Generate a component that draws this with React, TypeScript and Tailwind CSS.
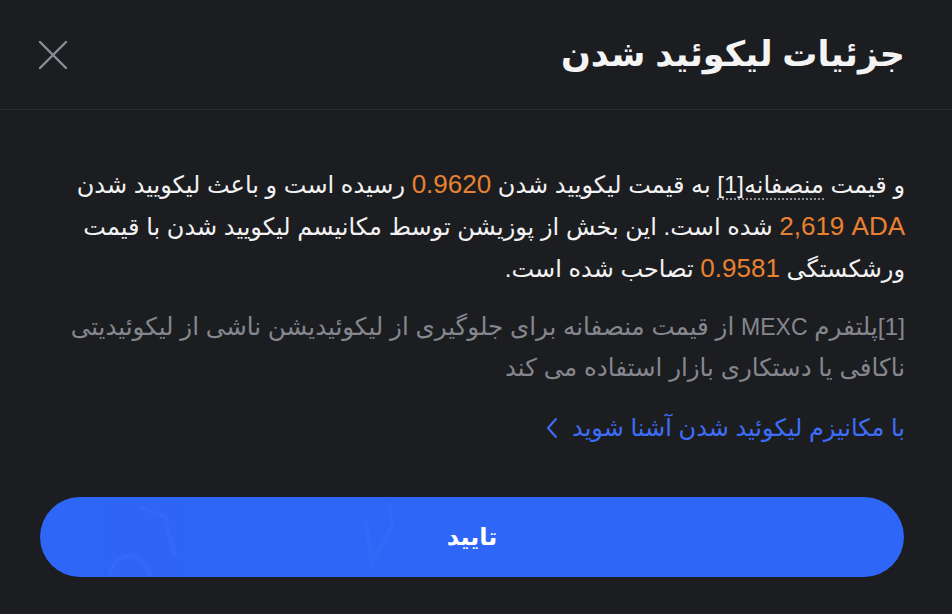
import React from 'react';

const font = { fontFamily: '"Liberation Sans", "DejaVu Sans", "Noto Sans", sans-serif' };

const Orange: React.FC<{ children: React.ReactNode }> = ({ children }) => (
  <span className="text-[#e8822f] text-[26px] leading-none whitespace-nowrap" dir="ltr">
    {children}
  </span>
);

const CloseIcon = () => (
  <svg width="30" height="30" viewBox="0 0 30 30" fill="none" stroke="#8a8d94" strokeWidth="2.4" strokeLinecap="round">
    <path d="M2 2 L28 28 M28 2 L2 28" />
  </svg>
);

const ChevronLeft = () => (
  <svg width="12" height="22" viewBox="0 0 12 22" fill="none" stroke="#3d6ef7" strokeWidth="2" strokeLinecap="round" strokeLinejoin="round">
    <path d="M10 2 L2 11 L10 20" />
  </svg>
);

export default function App() {
  return (
    <div dir="rtl" className="w-[952px] h-[614px] bg-[#1c1d21] overflow-hidden" style={font}>
      <div className="h-[110px] flex items-center justify-between pr-[47px] pl-[38px] border-b border-[#2d2f34]">
        <h1 className="text-[35px] font-bold text-[#f4f4f5] leading-none pb-[2px]">جزئیات لیکوئید شدن</h1>
        <button className="w-[30px] h-[30px] flex items-center justify-center">
          <CloseIcon />
        </button>
      </div>

      <div className="pl-[40px] pr-[47px] pt-[54px]">
        <p className="text-[24px] leading-[42px] text-[#f2f2f3] whitespace-nowrap">
          و قیمت{' '}
          <span className="border-b-2 border-dotted border-[#8a8d94]">منصفانه[1]</span> به قیمت لیکویید شدن{' '}
          <Orange>0.9620</Orange> رسیده است و باعث لیکویید شدن
          <br />
          <Orange>2,619 ADA</Orange> شده است. این بخش از پوزیشن توسط مکانیسم لیکویید شدن با قیمت
          <br />
          ورشکستگی <Orange>0.9581</Orange> تصاحب شده است.
        </p>

        <p className="mt-[16px] text-[24.5px] leading-[41px] text-[#85878e] whitespace-nowrap">
          [1]پلتفرم <span className="text-[23px] leading-none">MEXC</span> از قیمت منصفانه برای جلوگیری از لیکوئیدیشن ناشی از
          لیکوئیدیتی
          <br />
          ناکافی یا دستکاری بازار استفاده می کند
        </p>

        <a className="mt-[19px] flex items-center gap-[14px] text-[24px] leading-[42px] text-[#3d6ef7]">
          <span>با مکانیزم لیکوئید شدن آشنا شوید</span>
          <ChevronLeft />
        </a>
      </div>

      <div className="pl-[40px] pr-[48px] mt-[48px]">
        <button className="relative w-full h-[80px] rounded-full bg-[#2e66f7] overflow-hidden flex items-center justify-center text-[24px] font-bold text-white">
          <svg className="absolute left-[60px] top-0" width="90" height="80" viewBox="0 0 90 80" fill="none" stroke="#3a6ff8" strokeWidth="4" opacity="0.35">
            <path d="M40 10 L65 20 L75 60 M10 80 C10 55 45 50 50 80" />
          </svg>
          <svg className="absolute left-[320px] top-0" width="40" height="80" viewBox="0 0 40 80" fill="none" stroke="#3a6ff8" strokeWidth="4" opacity="0.35">
            <path d="M5 20 L12 65 L32 30 L30 5" />
          </svg>
          <span className="relative">تایید</span>
        </button>
      </div>
    </div>
  );
}
